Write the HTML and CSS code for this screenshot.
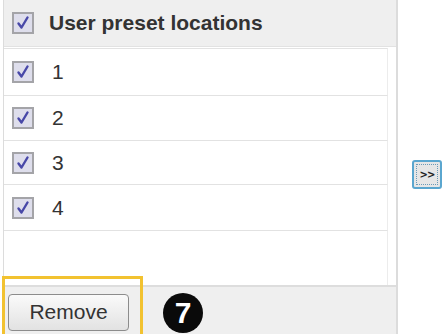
FILE: index.html
```html
<!DOCTYPE html>
<html>
<head>
<meta charset="utf-8">
<link rel="stylesheet" href="styles.css">
</head>
<body>
<div class="page">
  <div class="panel">
    <div class="header">
      <span class="cb"><svg viewBox="0 0 22 22" width="22" height="22"><rect x="1" y="1" width="20" height="20" fill="#dedeec" stroke="#a4a4a8" stroke-width="2"/><path d="M6.5 11.5 L9.5 15.5 L15.5 5.5" fill="none" stroke="#4848a8" stroke-width="2.4" stroke-linecap="round" stroke-linejoin="round"/></svg></span>
      <span class="htext">User preset locations</span>
    </div>
    <div class="list">
      <div class="row r1"><span class="cb"><svg viewBox="0 0 22 22" width="22" height="22"><rect x="1" y="1" width="20" height="20" fill="#dedeec" stroke="#a4a4a8" stroke-width="2"/><path d="M6.5 11.5 L9.5 15.5 L15.5 5.5" fill="none" stroke="#4848a8" stroke-width="2.4" stroke-linecap="round" stroke-linejoin="round"/></svg></span><span class="num">1</span></div>
      <div class="row r2"><span class="cb"><svg viewBox="0 0 22 22" width="22" height="22"><rect x="1" y="1" width="20" height="20" fill="#dedeec" stroke="#a4a4a8" stroke-width="2"/><path d="M6.5 11.5 L9.5 15.5 L15.5 5.5" fill="none" stroke="#4848a8" stroke-width="2.4" stroke-linecap="round" stroke-linejoin="round"/></svg></span><span class="num">2</span></div>
      <div class="row r3"><span class="cb"><svg viewBox="0 0 22 22" width="22" height="22"><rect x="1" y="1" width="20" height="20" fill="#dedeec" stroke="#a4a4a8" stroke-width="2"/><path d="M6.5 11.5 L9.5 15.5 L15.5 5.5" fill="none" stroke="#4848a8" stroke-width="2.4" stroke-linecap="round" stroke-linejoin="round"/></svg></span><span class="num">3</span></div>
      <div class="row r4"><span class="cb"><svg viewBox="0 0 22 22" width="22" height="22"><rect x="1" y="1" width="20" height="20" fill="#dedeec" stroke="#a4a4a8" stroke-width="2"/><path d="M6.5 11.5 L9.5 15.5 L15.5 5.5" fill="none" stroke="#4848a8" stroke-width="2.4" stroke-linecap="round" stroke-linejoin="round"/></svg></span><span class="num">4</span></div>
      <div class="filler"></div>
    </div>
    <div class="footer">
      <button class="remove">Remove</button>
      <span class="badge">7</span>
      <span class="highlight"></span>
    </div>
  </div>
  <div class="side">
    <button class="move"><span class="move-inner">&gt;&gt;</span></button>
  </div>
</div>
</body>
</html>
```
FILE: styles.css
```css
html, body {
  margin: 0;
  padding: 0;
  background: #ffffff;
}
body {
  width: 448px;
  height: 334px;
  overflow: hidden;
  font-family: "Liberation Sans", Arial, sans-serif;
  color: #333333;
}
.page {
  display: flex;
  height: 334px;
  padding-left: 3px;
}
.panel {
  position: relative;
  width: 392px;
  display: flex;
  flex-direction: column;
  border-left: 1px solid #dcdcdc;
  border-right: 2px solid #dcdcdc;
}
.header {
  height: 46px;
  background: #efefef;
  display: flex;
  align-items: center;
  padding-left: 8px;
  gap: 15px;
  border-bottom: 1px solid #e2e2e2;
}
.cb {
  width: 22px;
  height: 22px;
  display: block;
}
.cb svg {
  display: block;
}
.htext {
  font-weight: bold;
  font-size: 21px;
  color: #333333;
}
.list {
  flex: 1;
  display: flex;
  flex-direction: column;
  border-top: 1px solid #ffffff;
}
.row {
  display: flex;
  align-items: center;
  padding-left: 8px;
  gap: 18px;
  border-top: 1px solid #e2e2e2;
  margin-right: 8px;
  border-right: 1px solid #ececec;
}
.r1 { height: 46px; }
.r2 { height: 44px; }
.r3 { height: 43px; }
.r4 { height: 45px; }
.filler {
  flex: 1;
  border-top: 1px solid #e2e2e2;
  margin-right: 8px;
  border-right: 1px solid #ececec;
}
.num {
  font-size: 21px;
  color: #333333;
}
.footer {
  height: 47px;
  background: #efefef;
  border-top: 2px solid #dddddd;
  display: flex;
  align-items: center;
  padding-left: 4px;
}
.remove {
  width: 121px;
  height: 37px;
  margin-top: 3px;
  border: 1px solid #8c8c8c;
  border-radius: 4px;
  background: linear-gradient(#fafafa, #e2e2e2);
  font-family: "Liberation Sans", Arial, sans-serif;
  font-size: 21px;
  color: #333333;
  padding: 0;
}
.badge {
  margin-left: 34px;
  width: 40px;
  height: 40px;
  border-radius: 50%;
  background: #0a0a0a;
  color: #ffffff;
  font-weight: bold;
  font-size: 30px;
  display: flex;
  align-items: center;
  justify-content: center;
  margin-top: 4px;
}
.highlight {
  position: absolute;
  left: -2px;
  top: 276px;
  width: 135px;
  height: 62px;
  border: 3px solid #f2c230;
  pointer-events: none;
}
.side {
  flex: 1;
  display: flex;
  align-items: flex-start;
  padding-top: 160px;
  padding-left: 14px;
}
.move {
  width: 30px;
  height: 29px;
  padding: 2px;
  border: 2px solid #5aa6cf;
  border-radius: 3px;
  background: #e6e6e6;
  display: flex;
}
.move-inner {
  flex: 1;
  border: 1px dotted #6a9ab8;
  display: flex;
  align-items: center;
  justify-content: center;
  font-family: "DejaVu Sans", sans-serif;
  font-weight: bold;
  font-size: 10px;
  color: #222222;
  letter-spacing: -1px;
}
```
